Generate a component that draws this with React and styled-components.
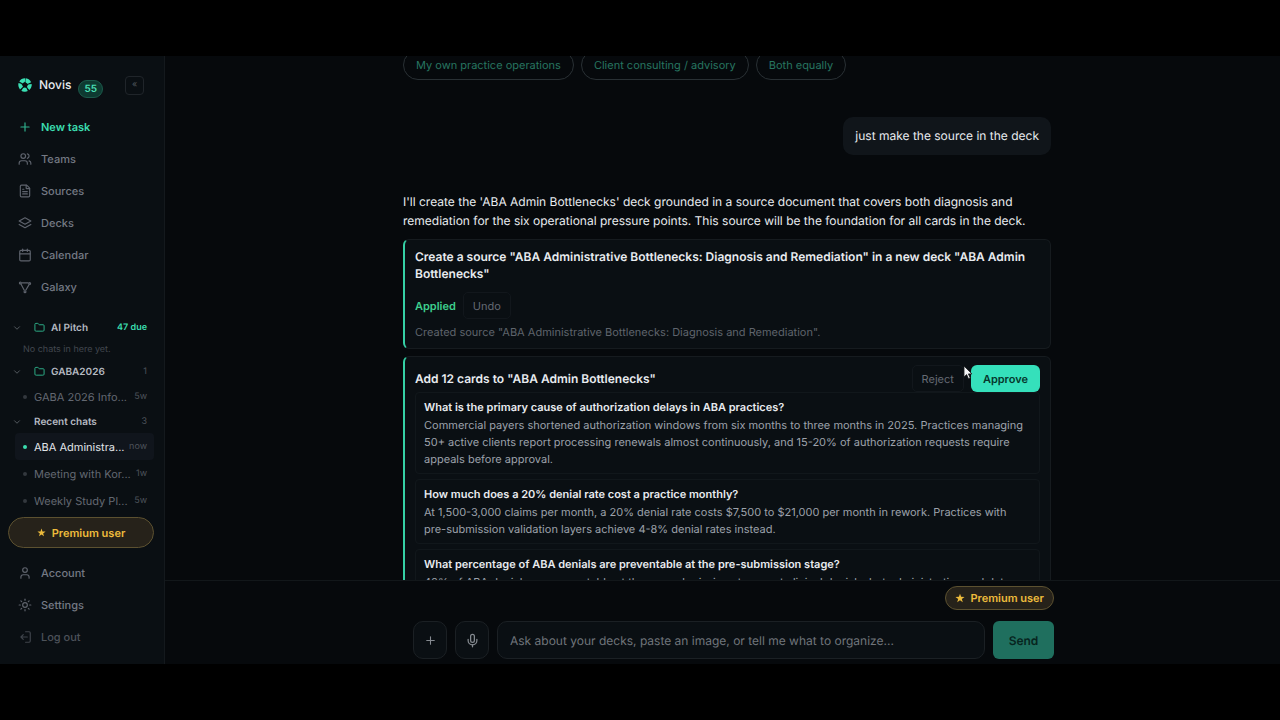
import React from "react";
import styled, { createGlobalStyle, css } from "styled-components";
import {
  Plus,
  Users,
  FileText,
  Calendar,
  Folder,
  ChevronDown,
  Mic,
  User,
  Sun,
} from "lucide-react";

const navItems = [
  { label: "Teams", icon: Users },
  { label: "Sources", icon: FileText },
  { label: "Decks", icon: DecksIcon },
  { label: "Calendar", icon: Calendar },
  { label: "Galaxy", icon: GalaxyIcon },
];

const recentChats = [
  { title: "ABA Administra...", age: "now", active: true },
  { title: "Meeting with Kor...", age: "1w" },
  { title: "Weekly Study Pl...", age: "5w" },
];

const replies = [
  "My own practice operations",
  "Client consulting / advisory",
  "Both equally",
];

const cards = [
  {
    question:
      "What is the primary cause of authorization delays in ABA practices?",
    answer:
      "Commercial payers shortened authorization windows from six months to three months in 2025. Practices managing 50+ active clients report processing renewals almost continuously, and 15-20% of authorization requests require appeals before approval.",
  },
  {
    question: "How much does a 20% denial rate cost a practice monthly?",
    answer:
      "At 1,500-3,000 claims per month, a 20% denial rate costs $7,500 to $21,000 per month in rework. Practices with pre-submission validation layers achieve 4-8% denial rates instead.",
  },
  {
    question:
      "What percentage of ABA denials are preventable at the pre-submission stage?",
    answer:
      "40% of ABA denials are preventable at the pre-submission stage: not clinical denials, but administrative and data",
  },
];

function LogoIcon() {
  return (
    <svg width="14" height="14" viewBox="0 0 24 24" aria-hidden="true">
      <circle
        cx="12"
        cy="12"
        r="8"
        fill="none"
        stroke="#3ae0b4"
        strokeWidth="7"
        strokeDasharray="8 2.05"
        transform="rotate(-83 12 12)"
      />
      <path
        d="M12 5.500l1.900 4.200 4.600.4-3.500 3 1.100 4.600-4.100-2.500-4.100 2.500 1.100-4.600-3.500-3 4.600-.4z"
        fill="#0a0f13"
      />
    </svg>
  );
}

function DecksIcon({ size = 14, strokeWidth = 2 }) {
  return (
    <svg
      width={size}
      height={size}
      viewBox="0 0 24 24"
      fill="none"
      stroke="currentColor"
      strokeWidth={strokeWidth}
      strokeLinejoin="round"
      strokeLinecap="round"
      aria-hidden="true"
    >
      <path d="M12 3l10 5.500-10 5.500L2 8.500z" />
      <path d="M2 14.500L12 20l10-5.500" />
    </svg>
  );
}

function GalaxyIcon({ size = 14, strokeWidth = 2 }) {
  return (
    <svg
      width={size}
      height={size}
      viewBox="0 0 24 24"
      fill="none"
      stroke="currentColor"
      strokeWidth={strokeWidth}
      aria-hidden="true"
    >
      <circle cx="4" cy="5" r="1.6" />
      <circle cx="20" cy="6" r="1.6" />
      <circle cx="12" cy="20" r="1.6" />
      <path d="M6 5h12M5 7l6 11M19 8l-6 10" />
    </svg>
  );
}

function LogoutIcon() {
  return (
    <svg
      width="14"
      height="14"
      viewBox="0 0 24 24"
      fill="none"
      stroke="currentColor"
      strokeWidth="2"
      strokeLinejoin="round"
      strokeLinecap="round"
      aria-hidden="true"
    >
      <path d="M13 3h6a2 2 0 0 1 2 2v14a2 2 0 0 1-2 2h-6" />
      <path d="M16 12H5M9 8l-4 4 4 4" />
    </svg>
  );
}

function StarIcon({ size }) {
  return (
    <svg width={size} height={size} viewBox="0 0 24 24" aria-hidden="true">
      <path
        d="M12 1.5l2.7 7.7 8.2.2-6.5 5 2.3 7.9L12 17.6l-6.7 4.7 2.3-7.9-6.5-5 8.2-.2z"
        fill="currentColor"
      />
    </svg>
  );
}

const App = () => {
  return (
    <>
      <GlobalStyle />
      <Stage>
        <Sidebar>
          <Brand>
            <LogoIcon />
            <BrandName>Novis</BrandName>
            <Count>55</Count>
            <Collapse type="button" aria-label="Collapse sidebar">
              «
            </Collapse>
          </Brand>
          <Nav>
            <NavLink href="#new" $tone="accent">
              <Plus size={14} strokeWidth={2} />
              New task
            </NavLink>
            {navItems.map(({ label, icon: Icon }) => (
              <NavLink href="#nav" key={label}>
                <Icon size={14} strokeWidth={2} />
                {label}
              </NavLink>
            ))}
          </Nav>
          <Groups>
            <GroupHead>
              <ChevronDown size={10} />
              <FolderMark size={11} />
              AI Pitch
              <Due>47 due</Due>
            </GroupHead>
            <Empty>No chats in here yet.</Empty>
            <GroupHead>
              <ChevronDown size={10} />
              <FolderMark size={11} />
              GABA2026
              <Meta>1</Meta>
            </GroupHead>
            <Chat href="#chat">
              <ChatTitle>GABA 2026 Info...</ChatTitle>
              <Meta>5w</Meta>
            </Chat>
            <GroupHead>
              <ChevronDown size={10} />
              Recent chats
              <Meta>3</Meta>
            </GroupHead>
            {recentChats.map((chat) => (
              <Chat href="#chat" key={chat.title} $active={chat.active}>
                <ChatTitle>{chat.title}</ChatTitle>
                <Meta>{chat.age}</Meta>
              </Chat>
            ))}
          </Groups>
          <Premium type="button" $wide>
            <StarIcon size={9} />
            Premium user
          </Premium>
          <Nav>
            <NavLink href="#account">
              <User size={14} strokeWidth={2} />
              Account
            </NavLink>
            <NavLink href="#settings">
              <Sun size={14} strokeWidth={2} />
              Settings
            </NavLink>
            <NavLink href="#logout" $tone="dim">
              <LogoutIcon />
              Log out
            </NavLink>
          </Nav>
        </Sidebar>
        <Main>
          <Thread>
            <Column>
              <Replies>
                {replies.map((reply) => (
                  <Reply type="button" key={reply}>
                    {reply}
                  </Reply>
                ))}
              </Replies>
              <Bubble>just make the source in the deck</Bubble>
              <Message>
                I'll create the 'ABA Admin Bottlenecks' deck grounded in a
                source document that covers both diagnosis and remediation for
                the six operational pressure points. This source will be the
                foundation for all cards in the deck.
              </Message>
              <Proposal>
                <ProposalTitle>
                  Create a source "ABA Administrative Bottlenecks: Diagnosis
                  and Remediation" in a new deck "ABA Admin Bottlenecks"
                </ProposalTitle>
                <Status>
                  Applied
                  <Ghost type="button">Undo</Ghost>
                </Status>
                <Note>
                  Created source "ABA Administrative Bottlenecks: Diagnosis and
                  Remediation".
                </Note>
              </Proposal>
              <Proposal $open>
                <ProposalHead>
                  <ProposalTitle>
                    Add 12 cards to "ABA Admin Bottlenecks"
                  </ProposalTitle>
                  <Actions>
                    <Ghost type="button">Reject</Ghost>
                    <Approve type="button">Approve</Approve>
                    <Cursor
                      width="10"
                      height="15"
                      viewBox="0 0 10 15"
                      aria-hidden="true"
                    >
                      <path
                        d="M1 1v11l2.600-2.400 1.900 4.200 1.800-.8-1.900-4.100H9z"
                        fill="#f4f5f6"
                        stroke="#15181b"
                        strokeWidth="0.8"
                      />
                    </Cursor>
                  </Actions>
                </ProposalHead>
                <CardList>
                  {cards.map((card) => (
                    <Card key={card.question}>
                      <Question>{card.question}</Question>
                      <Answer>{card.answer}</Answer>
                    </Card>
                  ))}
                </CardList>
              </Proposal>
            </Column>
          </Thread>
          <Composer>
            <ComposerInner>
              <Premium type="button">
                <StarIcon size={10} />
                Premium user
              </Premium>
              <InputRow>
                <Tool type="button" aria-label="Add attachment">
                  <Plus size={13} strokeWidth={2} />
                </Tool>
                <Tool type="button" aria-label="Dictate">
                  <Mic size={15} strokeWidth={2} />
                </Tool>
                <Prompt
                  type="text"
                  aria-label="Message"
                  placeholder="Ask about your decks, paste an image, or tell me what to organize..."
                />
                <Send type="button">Send</Send>
              </InputRow>
            </ComposerInner>
          </Composer>
        </Main>
      </Stage>
    </>
  );
};

const GlobalStyle = createGlobalStyle`
  *, *::before, *::after {
    box-sizing: border-box;
  }

  body {
    margin: 0;
    background: #000;
    color: #e8ebef;
    font-family: Inter, "Liberation Sans", sans-serif;
    font-size: 12px;
    text-rendering: geometricPrecision;
  }

  button, input {
    font-family: inherit;
    text-rendering: inherit;
  }

  a {
    color: inherit;
    text-decoration: none;
  }

  p, h3, h4 {
    margin: 0;
  }
`;

const Stage = styled.div`
  display: flex;
  height: 100vh;
  padding: 56px 0;
  background: #000;
`;

const Sidebar = styled.aside`
  display: flex;
  flex-direction: column;
  flex: 0 0 165px;
  min-width: 0;
  padding: 16px 10px 0 8px;
  background: #0a0f13;
  border-right: 1px solid #14191d;
  overflow: hidden;
`;

const Brand = styled.div`
  display: flex;
  align-items: center;
  gap: 7px;
  height: 26px;
  margin-bottom: 13px;
  padding: 0 10px;

  svg {
    flex: none;
  }
`;

const BrandName = styled.span`
  font-size: 12px;
  font-weight: 500;
  line-height: 16px;
`;

const Count = styled.span`
  align-self: flex-end;
  padding: 0 5px;
  border: 1px solid #1c5a4b;
  border-radius: 9px;
  background: #0e3a31;
  color: #4be0b6;
  font-size: 10px;
  font-weight: 600;
  line-height: 16px;
`;

const Collapse = styled.button`
  width: 19px;
  height: 19px;
  margin-left: auto;
  padding: 0;
  border: 1px solid #20252a;
  border-radius: 4px;
  background: transparent;
  color: #50565d;
  font-size: 9px;
  line-height: 16px;
`;

const Nav = styled.nav`
  display: flex;
  flex-direction: column;
`;

const tones = {
  accent: css`
    color: #3adcae;
    font-weight: 600;
  `,
  dim: css`
    color: #4d525a;
  `,
};

const NavLink = styled.a`
  display: flex;
  align-items: center;
  gap: 9px;
  height: 32px;
  padding-left: 10px;
  color: #747984;
  font-size: 11px;
  font-weight: 500;
  ${({ $tone }) => tones[$tone]}

  svg {
    opacity: 0.8;
  }
`;

const Groups = styled.div`
  display: flex;
  flex-direction: column;
  margin-top: 13px;
`;

const GroupHead = styled.div`
  display: flex;
  align-items: center;
  gap: 6px;
  height: 23px;
  padding: 0 7px 0 4px;
  color: #b6bac2;
  font-size: 10px;
  font-weight: 600;

  > svg:first-child {
    margin-right: 6px;
    color: #62676e;
  }
`;

const FolderMark = styled(Folder)`
  color: #2fb98f;
`;

const Due = styled.span`
  margin-left: auto;
  color: #3adcae;
  font-size: 9px;
`;

const Meta = styled.span`
  margin-left: auto;
  color: #4d525a;
  font-size: 9px;
  font-weight: 400;
`;

const Empty = styled.p`
  padding-left: 15px;
  color: #42474f;
  font-size: 9px;
  line-height: 21px;
`;

const Chat = styled.a`
  display: flex;
  align-items: center;
  gap: 4px;
  height: 27px;
  margin-left: 7px;
  padding: 0 7px 0 8px;
  border-radius: 4px;
  background: ${({ $active }) => ($active ? "#10151c" : "transparent")};
  color: ${({ $active }) => ($active ? "#e2e5ea" : "#636871")};
  font-size: 11px;

  &::before {
    content: "";
    flex: none;
    width: 4px;
    height: 4px;
    margin-right: 3px;
    border-radius: 50%;
    background: ${({ $active }) => ($active ? "#3adcae" : "#33383e")};
  }
`;

const ChatTitle = styled.span`
  white-space: nowrap;
`;

const Premium = styled.button`
  display: flex;
  align-items: center;
  justify-content: center;
  gap: 5px;
  height: 24px;
  padding: 0 9px;
  border: 1px solid #5c5130;
  border-radius: 16px;
  background: #26221a;
  color: #edbb3c;
  font-size: 11px;
  font-weight: 600;
  ${({ $wide }) =>
    $wide &&
    css`
      flex: none;
      gap: 6px;
      height: 31px;
      margin: 3px 0 9px;
    `}
`;

const Main = styled.main`
  display: flex;
  flex: 1;
  flex-direction: column;
  min-width: 0;
  background: #06090c;
`;

const Thread = styled.section`
  flex: 1;
  min-height: 0;
  padding-left: 9px;
  overflow: hidden;
`;

/* the thread is scrolled, so the quick replies run under its top edge */
const Column = styled.div`
  display: flex;
  flex-direction: column;
  max-width: 648px;
  margin: -6px auto 0;
`;

const Replies = styled.div`
  display: flex;
  gap: 7px;
  margin-bottom: 37px;
`;

const Reply = styled.button`
  height: 30px;
  padding: 0 12px;
  border: 1px solid #293034;
  border-radius: 15px;
  background: transparent;
  color: #277560;
  font-size: 11px;
`;

const Bubble = styled.p`
  align-self: flex-end;
  padding: 9px 12px;
  border-radius: 10px;
  background: #10151a;
  font-size: 12px;
  line-height: 20px;
`;

const Message = styled.p`
  margin: 37px 0 9px;
  font-size: 12px;
  line-height: 19px;
`;

const Proposal = styled.article`
  margin-bottom: 7px;
  padding: ${({ $open }) => ($open ? "8px 10px" : "8px 10px 6px")};
  border: 1px solid #161b1f;
  border-left: 2px solid #35d0a5;
  border-radius: 6px;
  background: #0a0f13;
`;

const ProposalHead = styled.div`
  display: flex;
  align-items: center;
  justify-content: space-between;
`;

const ProposalTitle = styled.h3`
  font-size: 12px;
  font-weight: 600;
  line-height: 17px;
`;

const Status = styled.div`
  display: flex;
  align-items: center;
  gap: 7px;
  margin: 10px 0 3px;
  color: #3ecf8e;
  font-size: 11px;
  font-weight: 600;
`;

const Ghost = styled.button`
  height: 27px;
  padding: 0 9px;
  border: 1px solid #12171c;
  border-radius: 5px;
  background: transparent;
  color: #656a73;
  font-size: 11px;
`;

const Approve = styled.button`
  height: 27px;
  padding: 0 12px;
  border: 0;
  border-radius: 6px;
  background: #35e0bb;
  color: #06372c;
  font-size: 11px;
  font-weight: 600;
`;

const Actions = styled.div`
  position: relative;
  display: flex;
  gap: 7px;
`;

const Cursor = styled.svg`
  position: absolute;
  top: 0;
  right: 67px;
`;

const Note = styled.p`
  color: #5f646c;
  font-size: 11px;
  line-height: 20px;
`;

const CardList = styled.div`
  display: flex;
  flex-direction: column;
  gap: 5px;
`;

const Card = styled.div`
  padding: 5px 8px;
  border: 1px solid #11171b;
  border-radius: 4px;
`;

const Question = styled.h4`
  margin-bottom: 1px;
  font-size: 11px;
  font-weight: 600;
  line-height: 18px;
`;

const Answer = styled.p`
  color: #9da2ab;
  font-size: 11px;
  line-height: 17px;
`;

const Composer = styled.footer`
  flex: none;
  padding: 5px 0 5px 22px;
  border-top: 1px solid #12171a;
`;

const ComposerInner = styled.div`
  display: flex;
  flex-direction: column;
  align-items: flex-end;
  gap: 11px;
  max-width: 641px;
  margin: 0 auto;
`;

const InputRow = styled.div`
  display: flex;
  gap: 8px;
  width: 100%;
  height: 38px;
`;

const Tool = styled.button`
  display: flex;
  align-items: center;
  justify-content: center;
  flex: 0 0 34px;
  padding: 0;
  border: 1px solid #1b2024;
  border-radius: 10px;
  background: #0a0f13;
  color: #858a90;
`;

const Prompt = styled.input`
  flex: 1;
  min-width: 0;
  padding: 0 12px;
  border: 1px solid #1b2024;
  border-radius: 10px;
  background: #0a0f13;
  color: #e8ebef;
  font-size: 12px;

  &::placeholder {
    color: #70757b;
    opacity: 1;
  }
`;

const Send = styled.button`
  flex: 0 0 61px;
  padding: 0;
  border: 0;
  border-radius: 6px;
  background: #1f6f5e;
  color: #07251f;
  font-size: 12px;
  font-weight: 600;
`;

export default App;
